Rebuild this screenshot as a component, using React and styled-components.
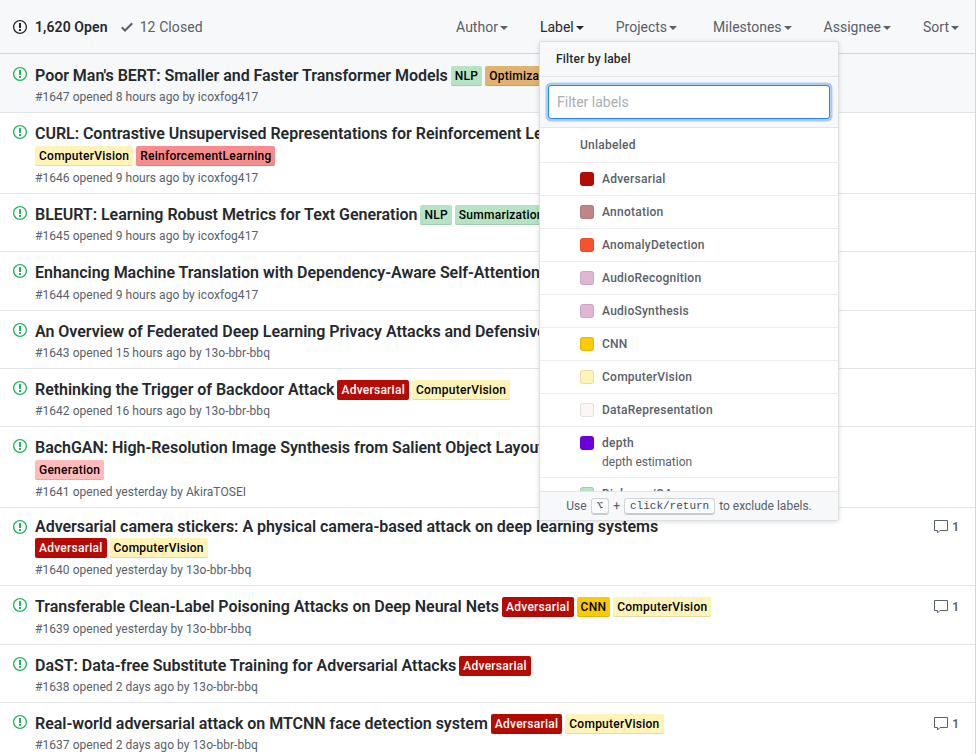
import React from "react"
import styled, { createGlobalStyle } from "styled-components"

const GlobalStyle = createGlobalStyle`
  html, body {
    margin: 0;
    height: 754px;
    overflow: hidden;
    background: #fff;
  }
  body {
    font-family: Roboto, "Liberation Sans", sans-serif;
    color: #24292e;
  }
`

const labelColors = {
  NLP: ["#b5e3c4", "#000"],
  Summarization: ["#b5e3c4", "#000"],
  Optimization: ["#e0b272", "#000"],
  ComputerVision: ["#fff3b8", "#000"],
  ReinforcementLearning: ["#f88c8c", "#000"],
  Adversarial: ["#b60b02", "#fff"],
  CNN: ["#fbca04", "#000"],
  Generation: ["#ffbbbb", "#000"],
}

const issues = [
  { height: 59, pad: 10, title: "Poor Man's BERT: Smaller and Faster Transformer Models", labels: ["NLP", "Optimization"], meta: "#1647 opened 8 hours ago by icoxfog417", hover: true },
  { height: 81, title: "CURL: Contrastive Unsupervised Representations for Reinforcement Learning", labels: ["ComputerVision", "ReinforcementLearning"], below: true, meta: "#1646 opened 9 hours ago by icoxfog417" },
  { height: 58, title: "BLEURT: Learning Robust Metrics for Text Generation", labels: ["NLP", "Summarization"], meta: "#1645 opened 9 hours ago by icoxfog417" },
  { height: 59, title: "Enhancing Machine Translation with Dependency-Aware Self-Attention", labels: [], meta: "#1644 opened 9 hours ago by icoxfog417" },
  { height: 58, title: "An Overview of Federated Deep Learning Privacy Attacks and Defensive", labels: [], meta: "#1643 opened 15 hours ago by 13o-bbr-bbq" },
  { height: 58, title: "Rethinking the Trigger of Backdoor Attack", labels: ["Adversarial", "ComputerVision"], meta: "#1642 opened 16 hours ago by 13o-bbr-bbq" },
  { height: 81, title: "BachGAN: High-Resolution Image Synthesis from Salient Object Layout", labels: ["Generation"], below: true, meta: "#1641 opened yesterday by AkiraTOSEI" },
  { height: 78, pad: 7, title: "Adversarial camera stickers: A physical camera-based attack on deep learning systems", labels: ["Adversarial", "ComputerVision"], below: true, meta: "#1640 opened yesterday by 13o-bbr-bbq", comments: 1 },
  { height: 59, title: "Transferable Clean-Label Poisoning Attacks on Deep Neural Nets", labels: ["Adversarial", "CNN", "ComputerVision"], meta: "#1639 opened yesterday by 13o-bbr-bbq", comments: 1 },
  { height: 58, title: "DaST: Data-free Substitute Training for Adversarial Attacks", labels: ["Adversarial"], meta: "#1638 opened 2 days ago by 13o-bbr-bbq" },
  { height: 58, title: "Real-world adversarial attack on MTCNN face detection system", labels: ["Adversarial", "ComputerVision"], meta: "#1637 opened 2 days ago by 13o-bbr-bbq", comments: 1 },
]

const filters = ["Author", "Label", "Projects", "Milestones", "Assignee", "Sort"]

const menuLabels = [
  { name: "Adversarial", color: "#b60b02" },
  { name: "Annotation", color: "#c08686" },
  { name: "AnomalyDetection", color: "#f9512e" },
  { name: "AudioRecognition", color: "#dfb7d5" },
  { name: "AudioSynthesis", color: "#dfb7d5" },
  { name: "CNN", color: "#fbca04" },
  { name: "ComputerVision", color: "#fff3b8" },
  { name: "DataRepresentation", color: "#fdf6f4" },
  { name: "depth", color: "#6b00e0", description: "depth estimation" },
  { name: "Dialogue/QA", color: "#b5e3c4" },
]

const Page = styled.div`
  position: relative;
  width: 975px;
  border-right: 1px solid #d1d5da;
`

const Header = styled.header`
  display: flex;
  align-items: center;
  justify-content: space-between;
  height: 53px;
  padding: 0 16px 0 13px;
  background: #f6f8fa;
  border-bottom: 1px solid #d1d5da;
  font-size: 14px;
`

const States = styled.div`
  display: flex;
  align-items: center;
  gap: 13px;
`

const StateLink = styled.span`
  display: flex;
  align-items: center;
  gap: ${(p) => (p.$active ? 8 : 7)}px;
  letter-spacing: 0.1px;
  font-weight: ${(p) => (p.$active ? 600 : 400)};
  color: ${(p) => (p.$active ? "#24292e" : "#586069")};
`

const Filters = styled.div`
  display: flex;
  align-items: center;
  gap: 32px;
`

const Filter = styled.span`
  display: flex;
  align-items: center;
  gap: 2px;
  margin-left: ${(p) => (p.$name === "Milestones" ? 4 : 0)}px;
  color: ${(p) => (p.$name === "Label" ? "#24292e" : "#586069")};
`

const Caret = styled.i`
  width: 0;
  height: 0;
  margin-top: 2px;
  border: 4px solid transparent;
  border-top-color: currentColor;
  border-bottom: 0;
`

const Row = styled.div`
  display: flex;
  justify-content: space-between;
  box-sizing: border-box;
  height: ${(p) => p.$height}px;
  padding: ${(p) => p.$pad}px 16px 0 13px;
  background: ${(p) => (p.$hover ? "#f6f8fa" : "#fff")};
  border-bottom: 1px solid #e1e4e8;
`

const StatusIcon = styled.svg`
  flex: none;
  margin: ${(p) => p.$top}px 8px 0 0;
  fill: #22b35c;
`

const Main = styled.div`
  flex: 1;
  min-width: 0;
`

const Title = styled.span`
  font-size: 16px;
  font-weight: 600;
  letter-spacing: -0.03px;
  line-height: 24px;
  color: #24292e;
`

const TitleLine = styled.div`
  white-space: nowrap;
  height: ${(p) => p.$height}px;
`

const LabelList = styled.span`
  display: ${(p) => (p.$below ? "flex" : "inline-flex")};
  gap: 3px;
  margin: ${(p) => (p.$below ? "0 0 3px" : "0 0 0 3px")};
  vertical-align: 1px;
`

const Label = styled.span`
  display: inline-block;
  height: 20px;
  padding: 0 4px;
  border-radius: 2px;
  font-size: 12px;
  font-weight: 500;
  letter-spacing: 0.25px;
  line-height: 20px;
  background: ${(p) => p.$bg};
  color: ${(p) => p.$fg};
  box-shadow: inset 0 -1px 0 rgba(27, 31, 35, 0.12);
`

const Meta = styled.div`
  font-size: 12px;
  letter-spacing: 0.05px;
  line-height: 18px;
  color: #586069;
`

const Comments = styled.div`
  display: flex;
  align-items: center;
  gap: 4px;
  height: 18px;
  margin-top: 3px;
  font-size: 12px;
  font-weight: 600;
  color: #586069;
`

const CommentIcon = styled.svg`
  fill: none;
  stroke: #586069;
`

const Menu = styled.div`
  position: absolute;
  top: 41px;
  left: 539px;
  width: 298px;
  height: 478px;
  display: flex;
  flex-direction: column;
  background: #fff;
  border: 1px solid rgba(27, 31, 35, 0.15);
  border-radius: 3px;
  box-shadow: 0 1px 5px rgba(27, 31, 35, 0.15);
  overflow: hidden;
`

const MenuHeader = styled.div`
  flex: none;
  height: 34px;
  padding-left: 16px;
  background: #f6f8fa;
  border-bottom: 1px solid #e1e4e8;
  font-size: 12px;
  font-weight: 500;
  letter-spacing: 0.2px;
  line-height: 34px;
`

const MenuFilter = styled.div`
  flex: none;
  height: 51px;
  box-sizing: border-box;
  padding: 8px;
  background: #f6f8fa;
  border-bottom: 1px solid #e1e4e8;
`

const FilterInput = styled.input`
  display: block;
  width: 100%;
  height: 34px;
  box-sizing: border-box;
  padding: 0 8px;
  border: 1px solid #2188ff;
  border-radius: 3px;
  outline: none;
  box-shadow: 0 0 0 2.5px rgba(3, 102, 214, 0.3);
  font: 14px Roboto, "Liberation Sans", sans-serif;
  &::placeholder {
    color: #a9aeb4;
  }
`

const MenuList = styled.div`
  flex: 1;
  min-height: 0;
  overflow: hidden;
`

const MenuItem = styled.div`
  display: flex;
  flex-direction: column;
  justify-content: center;
  box-sizing: border-box;
  height: ${(p) => (p.$first ? 35 : p.$tall ? 51 : 33)}px;
  padding-left: 40px;
  border-bottom: 1px solid #eaecef;
  font-size: 12px;
  color: #586069;
`

const ItemName = styled.div`
  display: flex;
  align-items: center;
  gap: 8px;
  font-weight: 500;
  letter-spacing: 0.25px;
  line-height: 18px;
`

const Swatch = styled.span`
  width: 14px;
  height: 14px;
  box-sizing: border-box;
  border-radius: 3px;
  background: ${(p) => p.$color};
  border: 1px solid rgba(27, 31, 35, 0.1);
`

const ItemDescription = styled.div`
  margin: 1px 0 0 22px;
  line-height: 18px;
`

const MenuFooter = styled.div`
  flex: none;
  display: flex;
  align-items: center;
  justify-content: center;
  gap: 4px;
  height: 28px;
  background: #f6f8fa;
  border-top: 1px solid #e1e4e8;
  font-size: 12px;
  color: #586069;
`

const Key = styled.kbd`
  display: inline-block;
  padding: 0 5px;
  height: 15px;
  font: 11px/15px "Liberation Mono", monospace;
  color: #444d56;
  background: #fafbfc;
  border: 1px solid #d1d5da;
  border-bottom-color: #c6cbd1;
  border-radius: 3px;
  box-shadow: inset 0 -1px 0 #c6cbd1;
`

const IssueIcon = ({ className }) => (
  <svg className={className} width="14" height="16" viewBox="0 0 14 16">
    <path
      fillRule="evenodd"
      d="M7 2.3c3.14 0 5.7 2.56 5.7 5.7s-2.56 5.7-5.7 5.7A5.71 5.71 0 011.3 8c0-3.14 2.56-5.7 5.7-5.7zM7 1C3.14 1 0 4.14 0 8s3.14 7 7 7 7-3.14 7-7-3.14-7-7-7zm1 3H6v5h2V4zm0 6H6v2h2v-2z"
    />
  </svg>
)

const titleHeight = (issue) => {
  if (issue.pad === 7) return 23
  if (issue.below || issue.pad === 10 || issue.height === 58) return 24
  return 25
}

const Issue = ({ issue }) => {
  const labels = (
    <LabelList $below={issue.below}>
      {issue.labels.map((name) => (
        <Label key={name} $bg={labelColors[name][0]} $fg={labelColors[name][1]}>
          {name}
        </Label>
      ))}
    </LabelList>
  )
  return (
    <Row $hover={issue.hover} $height={issue.height} $pad={issue.pad || 9}>
      <StatusIcon as={IssueIcon} $top={issue.pad === 7 ? 4 : 2} />
      <Main>
        <TitleLine $height={titleHeight(issue)}>
          <Title>{issue.title}</Title>
          {!issue.below && issue.labels.length > 0 && labels}
        </TitleLine>
        {issue.below && labels}
        <Meta>{issue.meta}</Meta>
      </Main>
      {issue.comments && (
        <Comments>
          <CommentIcon width="14" height="14" viewBox="0 0 14 14">
            <path d="M0.5 0.5h13v10H6L3.5 13v-2.5H0.5z" />
          </CommentIcon>
          {issue.comments}
        </Comments>
      )}
    </Row>
  )
}

const App = () => (
  <Page>
    <GlobalStyle />
    <Header>
      <States>
        <StateLink $active>
          <svg width="14" height="16" viewBox="0 0 14 16" fill="#24292e">
            <path
              fillRule="evenodd"
              d="M7 2.3c3.14 0 5.7 2.56 5.7 5.7s-2.56 5.7-5.7 5.7A5.71 5.71 0 011.3 8c0-3.14 2.56-5.7 5.7-5.7zM7 1C3.14 1 0 4.14 0 8s3.14 7 7 7 7-3.14 7-7-3.14-7-7-7zm1 3H6v5h2V4zm0 6H6v2h2v-2z"
            />
          </svg>
          1,620 Open
        </StateLink>
        <StateLink>
          <svg width="12" height="16" viewBox="0 0 12 16" fill="#586069">
            <path fillRule="evenodd" d="M12 5l-8 8-4-4 1.5-1.5L4 10l6.5-6.5L12 5z" />
          </svg>
          12 Closed
        </StateLink>
      </States>
      <Filters>
        {filters.map((name) => (
          <Filter key={name} $name={name}>
            {name}
            <Caret />
          </Filter>
        ))}
      </Filters>
    </Header>
    {issues.map((issue) => (
      <Issue key={issue.meta} issue={issue} />
    ))}
    <Menu>
      <MenuHeader>Filter by label</MenuHeader>
      <MenuFilter>
        <FilterInput placeholder="Filter labels" />
      </MenuFilter>
      <MenuList>
        <MenuItem $first>
          <ItemName>Unlabeled</ItemName>
        </MenuItem>
        {menuLabels.map((item) => (
          <MenuItem key={item.name} $tall={item.description}>
            <ItemName>
              <Swatch $color={item.color} />
              {item.name}
            </ItemName>
            {item.description && <ItemDescription>{item.description}</ItemDescription>}
          </MenuItem>
        ))}
      </MenuList>
      <MenuFooter>
        Use <Key>⌥</Key> + <Key>click/return</Key> to exclude labels.
      </MenuFooter>
    </Menu>
  </Page>
)

export default App
